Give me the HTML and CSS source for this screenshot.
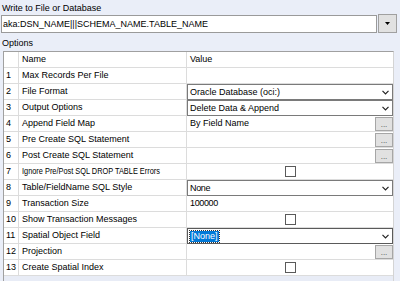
FILE: index.html
```html
<!DOCTYPE html>
<html>
<head>
<meta charset="utf-8">
<link rel="stylesheet" href="styles.css">
</head>
<body>
<div class="panel">
  <div class="label">Write to File or Database</div>
  <div class="dest">
    <div class="dest-input">aka:DSN_NAME|||SCHEMA_NAME.TABLE_NAME</div>
    <div class="dest-btn"><svg width="5" height="3" viewBox="0 0 5 3"><polygon points="0,0 5,0 2.5,3" fill="#000"/></svg></div>
  </div>
  <div class="label options">Options</div>
  <div class="grid">
    <div class="c n"></div><div class="c">Name</div><div class="c v">Value</div>

    <div class="c n">1</div><div class="c">Max Records Per File</div><div class="c v"></div>

    <div class="c n">2</div><div class="c">File Format</div>
    <div class="c v combo"><span>Oracle Database (oci:)</span><svg class="chev" width="7" height="5" viewBox="0 0 7 5"><polyline points="0.5,0.8 3.5,3.8 6.5,0.8" fill="none" stroke="#222" stroke-width="1.2"/></svg></div>

    <div class="c n">3</div><div class="c">Output Options</div>
    <div class="c v combo"><span>Delete Data &amp; Append</span><svg class="chev" width="7" height="5" viewBox="0 0 7 5"><polyline points="0.5,0.8 3.5,3.8 6.5,0.8" fill="none" stroke="#222" stroke-width="1.2"/></svg></div>

    <div class="c n">4</div><div class="c">Append Field Map</div>
    <div class="c v withbtn"><span>By Field Name</span><div class="ell">...</div></div>

    <div class="c n">5</div><div class="c">Pre Create SQL Statement</div>
    <div class="c v withbtn"><span></span><div class="ell">...</div></div>

    <div class="c n">6</div><div class="c">Post Create SQL Statement</div>
    <div class="c v withbtn"><span></span><div class="ell">...</div></div>

    <div class="c n">7</div><div class="c"><span class="condensed">Ignore Pre/Post SQL DROP TABLE Errors</span></div>
    <div class="c v check"><div class="chk"></div></div>

    <div class="c n">8</div><div class="c">Table/FieldName SQL Style</div>
    <div class="c v combo"><span class="tight">None</span><svg class="chev" width="7" height="5" viewBox="0 0 7 5"><polyline points="0.5,0.8 3.5,3.8 6.5,0.8" fill="none" stroke="#222" stroke-width="1.2"/></svg></div>

    <div class="c n">9</div><div class="c">Transaction Size</div><div class="c v tight">100000</div>

    <div class="c n">10</div><div class="c">Show Transaction Messages</div>
    <div class="c v check"><div class="chk"></div></div>

    <div class="c n">11</div><div class="c">Spatial Object Field</div>
    <div class="c v combo focus"><span class="sel">[None]</span><svg class="chev" width="7" height="5" viewBox="0 0 7 5"><polyline points="0.5,0.8 3.5,3.8 6.5,0.8" fill="none" stroke="#222" stroke-width="1.2"/></svg></div>

    <div class="c n">12</div><div class="c">Projection</div>
    <div class="c v withbtn"><span></span><div class="ell">...</div></div>

    <div class="c n">13</div><div class="c">Create Spatial Index</div>
    <div class="c v check"><div class="chk"></div></div>
  </div>
</div>
</body>
</html>
```

FILE: styles.css
```css
html, body {
  margin: 0;
  padding: 0;
}
body {
  width: 400px;
  height: 281px;
  overflow: hidden;
  background: #eaeef8;
  font-family: "Liberation Sans", Arial, sans-serif;
  font-size: 9px;
  color: #000;
}
.panel {
  display: flex;
  flex-direction: column;
  padding-top: 3px;
}
.label {
  margin-left: 2px;
  height: 10px;
  line-height: 10px;
  white-space: nowrap;
}
.dest {
  display: flex;
  align-items: flex-end;
  margin-top: 1px;
  margin-left: 1px;
  height: 19px;
}
.dest-input {
  width: 376px;
  height: 18px;
  box-sizing: border-box;
  border: 1px solid #9a9a9a;
  background: #fff;
  padding-left: 1px;
  line-height: 16px;
  white-space: nowrap;
}
.dest-btn {
  width: 19px;
  height: 19px;
  margin-left: 1px;
  box-sizing: border-box;
  border: 1px solid #a0a0a0;
  background: #e1e1e1;
  display: flex;
  align-items: center;
  justify-content: center;
}
.options {
  margin-top: 5px;
}
.grid {
  margin-top: 3px;
  margin-left: 3px;
  width: 391px;
  height: 240px;
  box-sizing: border-box;
  border-top: 1px solid #a0a0a0;
  border-left: 1px solid #a0a0a0;
  border-right: 1px solid #d4d4d4;
  background: #e8ecf6;
  display: grid;
  grid-template-columns: 15px 168px 1fr;
  grid-auto-rows: 16px;
  align-content: start;
}
.c {
  background: #fff;
  box-sizing: border-box;
  border-right: 1px solid #dcdcdc;
  border-bottom: 1px solid #dcdcdc;
  padding-left: 3px;
  line-height: 15px;
  white-space: nowrap;
  overflow: hidden;
}
.n {
  padding-left: 2px;
}
.v {
  border-right: none;
}
.tight {
  letter-spacing: -0.35px;
}
.condensed {
  display: inline-block;
  transform: scaleX(0.82);
  transform-origin: left center;
}
.combo {
  border: 1px solid #7a7a7a;
  display: flex;
  align-items: center;
  justify-content: space-between;
  padding: 0 2px 0 2px;
  line-height: 14px;
}
.combo.focus {
  border-color: #5a5a5a;
}
.chev {
  display: block;
  margin-right: 1px;
}
.sel {
  background: #0078d7;
  color: #fff;
  padding: 0 1px;
  line-height: 11px;
  outline: 1px dotted #333;
}
.withbtn {
  display: flex;
  justify-content: space-between;
  align-items: flex-start;
  padding-right: 0;
}
.ell {
  width: 18px;
  height: 14px;
  margin-top: 1px;
  box-sizing: border-box;
  border: 1px solid #a6a6a6;
  background: #e1e1e1;
  color: #444;
  font-size: 8px;
  line-height: 10px;
  text-align: center;
  display: flex;
  align-items: flex-end;
  justify-content: center;
}
.check {
  display: flex;
  align-items: center;
  justify-content: center;
  padding-left: 0;
}
.chk {
  width: 11px;
  height: 11px;
  box-sizing: border-box;
  border: 1px solid #5a5a5a;
  background: #fff;
}
```
